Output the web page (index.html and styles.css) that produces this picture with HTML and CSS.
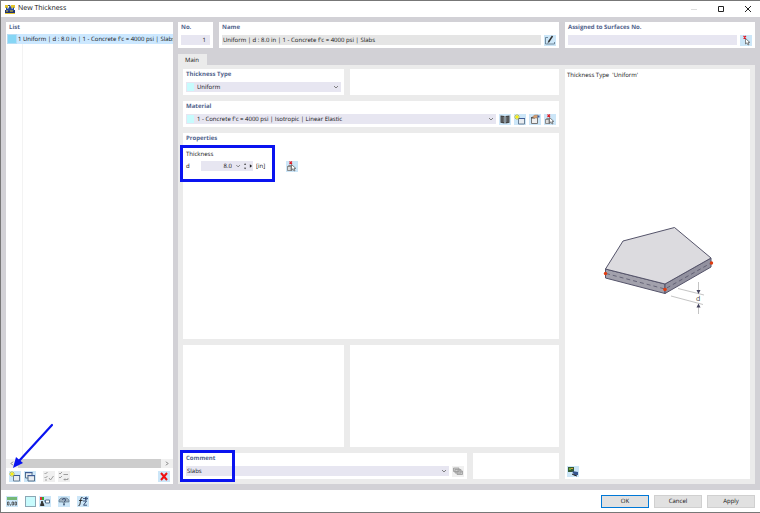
FILE: index.html
```html
<!DOCTYPE html>
<html lang="en">
<head>
<meta charset="utf-8">
<meta name="viewport" content="width=device-width, initial-scale=1">
<title>New Thickness</title>
<link rel="stylesheet" href="styles.css">
</head>
<body>
<svg class="defs" aria-hidden="true">
  <symbol id="chevron" viewBox="0 0 8 8"><path d="M2 3l2 2 2-2" fill="none" stroke="#666" stroke-width=".8"/></symbol>
  <symbol id="new" viewBox="0 0 12 11"><path d="M4.500 4.500h6v5.500h-6z" fill="#e8ecf0" stroke="#6a8096"/><path d="M4 4h7v1H4z" fill="#3d5c96"/><path d="M3 0v6M0 3h6M1 1l4 4M5 1L1 5" stroke="#c5bd19" stroke-width=".8"/><circle cx="3" cy="3" r="1.300" fill="#fff200"/></symbol>
  <symbol id="pick" viewBox="0 0 12 11"><path d="M1.500 5.500l1.500-1h3v5H1.500zM1.500 5.500h3.500v4" fill="#ddd" stroke="#777" stroke-width=".8"/><path d="M5.500 3.500v5.500l1.400-1.200 1.100 2.200 1-.5-1-2.100h1.800z" fill="#fff" stroke="#555" stroke-width=".7"/><path d="M3.500 .5l2.500 2.500M6 .5L3.500 3" stroke="#e01b24" stroke-width="1.100"/></symbol>
</svg>
<div class="window">
  <header class="titlebar">
    <svg class="app-icon" viewBox="0 0 12 11" aria-hidden="true"><path d="M1 6h10v3H1z" fill="#20316f"/><path d="M1 1h3v3H1zM7 1h4v3H7z" fill="#e2c52d"/><path d="M2 3l2 2 2-4 2 4 2-2v4H2z" fill="#294b99"/><path d="M1 9.500h10M2 7h2M6 7h3" stroke="#e2c52d"/><path d="M4 1.500h2" stroke="#48545b"/></svg>
    <h1>New Thickness</h1>
    <div class="caption">
      <button type="button" aria-label="Minimize"><svg viewBox="0 0 10 10"><path d="M2 5.500h6" stroke="#ddd"/></svg></button>
      <button type="button" aria-label="Maximize"><svg viewBox="0 0 10 10"><path d="M2.500 2.500h5v5h-5z" fill="none" stroke="#222"/></svg></button>
      <button type="button" aria-label="Close"><svg viewBox="0 0 10 10"><path d="M2 2l6 6M8 2L2 8" stroke="#222"/></svg></button>
    </div>
  </header>

  <main class="body">
    <section class="panel list">
      <h2 class="label">List</h2>
      <ul class="items">
        <li class="item"><span class="item-swatch"></span><span class="item-text">1 Uniform | d : 8.0 in | 1 - Concrete f'c = 4000 psi | Slabs</span></li>
      </ul>
      <div class="scrollbar">
        <svg viewBox="0 0 10 10"><path d="M6 3L4 5l2 2" fill="none" stroke="#666"/></svg>
        <span class="thumb"></span>
        <svg viewBox="0 0 10 10"><path d="M4 3l2 2-2 2" fill="none" stroke="#666"/></svg>
      </div>
      <div class="tools">
        <button type="button" class="icon" aria-label="New">
          <svg viewBox="0 0 12 11"><use href="#new"/></svg>
        </button>
        <button type="button" class="icon" aria-label="Copy"><svg viewBox="0 0 12 11"><path d="M1.500 1.500h6.500v5.500h-6.500z" fill="#e8ecf0" stroke="#55708c"/><path d="M1 1h7.500v1.200H1z" fill="#3d5c96"/><path d="M4 4.500h6.500V10H4z" fill="#e8ecf0" stroke="#55708c"/><path d="M3.500 4H11v1.200H3.500z" fill="#3d5c96"/></svg></button>
        <button type="button" class="icon off gap" aria-label="Check all" disabled><svg viewBox="0 0 12 11"><path d="M1.500 2l1 1 2-2M1.500 6l1 1 2-2M2 9h2M6 7l1.500 2L10.500 5" fill="none" stroke="#8a8a8a" stroke-width=".8"/></svg></button>
        <button type="button" class="icon off" aria-label="Toggle checks" disabled><svg viewBox="0 0 12 11"><path d="M1 2l1 1 2-2M1 6l1 1 2-2M5.500 3.500H10M6 8.500h4V7M6 8.500l1-1M6 8.500l1 1" fill="none" stroke="#8a8a8a" stroke-width=".8"/></svg></button>
        <button type="button" class="icon last" aria-label="Delete"><svg viewBox="0 0 12 11"><path d="M3 2l6 7M9 2L3 9" stroke="#f01010" stroke-width="2"/></svg></button>
        <svg class="arrow" viewBox="0 0 44 50" aria-hidden="true"><path d="M42 3L9 39" stroke="#0a14f0" stroke-width="2.200" stroke-linecap="round"/><path d="M3 46l3-11 7 6z" fill="#0a14f0"/></svg>
      </div>
    </section>

    <div class="detail">
      <div class="heading">
        <section class="panel">
          <label class="label" for="no">No.</label>
          <div class="row"><input id="no" class="field num" value="1"></div>
        </section>
        <section class="panel">
          <label class="label" for="name">Name</label>
          <div class="row">
            <input id="name" class="field plain" readonly value="Uniform | d : 8.0 in | 1 - Concrete f'c = 4000 psi | Slabs">
            <button type="button" class="icon" aria-label="Edit name"><svg viewBox="0 0 12 11"><path d="M4 2.500H1.500v6.500h9V7" fill="none" stroke="#5a7388" stroke-width=".8"/><path d="M8.500 1L4.500 7" stroke="#333" stroke-width="1.500"/><path d="M4.800 6.500l-1 1.800" stroke="#333" stroke-width=".7"/></svg></button>
          </div>
        </section>
        <section class="panel">
          <label class="label" for="surfaces">Assigned to Surfaces No.</label>
          <div class="row">
            <input id="surfaces" class="field">
            <button type="button" class="icon" aria-label="Select surfaces"><svg viewBox="0 0 12 11"><path d="M5.500 3.500v5.500l1.400-1.200 1.100 2.200 1-.5-1-2.100h1.800z" fill="#fff" stroke="#555" stroke-width=".7"/><path d="M3.500 1l2.500 2.500M6 1L3.500 3.500" stroke="#e01b24" stroke-width="1.100"/></svg></button>
          </div>
        </section>
      </div>

      <nav class="tabs"><button type="button" class="tab">Main</button></nav>

      <div class="page">
        <div class="form">
          <div class="split">
            <section class="panel">
              <label class="label" for="type">Thickness Type</label>
              <div class="row">
                <div class="combo"><i class="swatch"></i><select id="type" class="field"><option>Uniform</option></select><svg class="chev"><use href="#chevron"/></svg></div>
              </div>
            </section>
            <section class="panel"></section>
          </div>
          <section class="panel">
            <label class="label" for="material">Material</label>
            <div class="row">
              <div class="combo"><i class="swatch"></i><select id="material" class="field"><option>1 - Concrete f'c = 4000 psi | Isotropic | Linear Elastic</option></select><svg class="chev"><use href="#chevron"/></svg></div>
              <button type="button" class="icon" aria-label="Library"><svg viewBox="0 0 12 11"><path d="M1.500 1.500l4 .5v7.500l-4-.8zM10.500 1.500l-4 .5v7.500l4-.8z" fill="#444"/><path d="M3 3v5M4.500 3v5M7.500 3v5M9 3v5" stroke="#8f979d" stroke-width=".5"/></svg></button>
              <button type="button" class="icon" aria-label="New material"><svg viewBox="0 0 12 11"><use href="#new"/></svg></button>
              <button type="button" class="icon" aria-label="Edit material"><svg viewBox="0 0 12 11"><path d="M2.500 3.500h6v6h-6z" fill="#eee" stroke="#777"/><path d="M2 3h4v1.500H2z" fill="#555"/><path d="M3.500 3l2-2h3.500l-1 3H5z" fill="#d7a276" stroke="#8a6a50" stroke-width=".4"/><path d="M8.500 1.500h2v2h-2z" fill="#4063a0"/></svg></button>
              <button type="button" class="icon" aria-label="Pick material"><svg viewBox="0 0 12 11"><use href="#pick"/></svg></button>
            </div>
          </section>
          <section class="panel properties">
            <h2 class="label">Properties</h2>
            <div class="thickness">
              <label for="d">Thickness</label>
              <div class="row">
                <span class="symbol">d</span>
                <div class="spin">
                  <input id="d" class="field num" value="8.0">
                  <svg class="spin-marks" viewBox="0 0 20 10" aria-hidden="true"><path d="M1.500 4l2 2 2-2" fill="none" stroke="#555" stroke-width=".8"/><path d="M10 3.500l1.200-1.500 1.200 1.500zM10 7l1.200 1.500L12.400 7zM16.500 3l2.500 2-2.500 2z" fill="#222"/></svg>
                </div>
                <span class="unit">[in]</span>
                <button type="button" class="icon" aria-label="Pick thickness"><svg viewBox="0 0 12 11"><use href="#pick"/></svg></button>
              </div>
              <span class="mark mark-thickness"></span>
            </div>
          </section>
          <div class="split lower">
            <section class="panel"></section>
            <section class="panel"></section>
          </div>
          <div class="split comment-row">
            <section class="panel comment">
              <label class="label" for="comment">Comment</label>
              <div class="row">
                <div class="combo"><input id="comment" class="field" value="Slabs"><svg class="chev"><use href="#chevron"/></svg></div>
                <button type="button" class="icon off" aria-label="Comments" disabled><svg viewBox="0 0 12 11"><path d="M1.500 2h5.500v3.500H1.500zM3 3.500h6V7H3zM5 5h5.500v3.500H5z" fill="#ccc" stroke="#999" stroke-width=".8"/></svg></button>
              </div>
              <span class="mark mark-comment"></span>
            </section>
            <section class="panel"></section>
          </div>
        </div>

        <aside class="panel preview">
          <p>Thickness Type&nbsp; 'Uniform'</p>
          <svg class="slab" viewBox="567 223 180 100" role="img" aria-label="Uniform slab of thickness d">
            <g stroke="#55546a" stroke-width="1" stroke-linejoin="round">
              <path d="M605.500 269l59.500 15v9.500L605.500 278z" fill="#a2a1ac"/>
              <path d="M665 284l46-26v9l-46 26.500z" fill="#92919f"/>
              <path d="M605.500 269l17.500-28 51.500-13.500L711 258l-46 26z" fill="#dcdbdf"/>
              <path d="M606 273.500l59 15.500 46-26" fill="none" stroke-dasharray="4 3" stroke-width=".8"/>
            </g>
            <path d="M678 288.500l26 6.500M671 296l32 8.500" stroke="#aaa" stroke-width=".7"/>
            <path d="M698.500 282v9M698.500 305v9" stroke="#aaa" stroke-width=".7"/>
            <path d="M696.500 290h4l-2 4zM696.500 307.500h4l-2-4z" fill="#44435c"/>
            <g fill="#e03c10"><circle cx="605.500" cy="273.500" r="1.700"/><circle cx="665" cy="289.500" r="1.800"/><circle cx="711.500" cy="263" r="1.700"/></g>
            <text x="696" y="301" font-size="7" fill="#444">d</text>
          </svg>
          <button type="button" class="icon" aria-label="Picture options"><svg viewBox="0 0 12 11"><path d="M1 1h6v5H1z" fill="#355b35"/><path d="M2 2h2v2H2z" fill="#6fae3c"/><path d="M4 2h2v1H4z" fill="#d9a23c"/><path d="M5 5l6 1v3H7z" fill="#36568f"/><path d="M5 8l2 1 3 1" stroke="#222"/></svg></button>
        </aside>
      </div>
    </div>
  </main>

  <footer class="footer">
    <button type="button" class="icon" aria-label="Units"><svg viewBox="0 0 12 11"><path d="M1 1h10v3H1z" fill="#75b877"/><path d="M1.500 6h1.500v3H1.500zM6 6h1.500v3H6zM9 6h1.500v3H9z" fill="none" stroke="#333" stroke-width=".7"/><path d="M4 9h1" stroke="#333"/></svg></button>
    <button type="button" class="color gap" aria-label="Color"></button>
    <button type="button" class="icon" aria-label="Display"><svg viewBox="0 0 12 11"><path d="M1 1h2v3H1z" fill="#d33"/><path d="M3 1h2v3H3z" fill="#3a3"/><path d="M1.500 9.500L3 5l2 4.500z" fill="#333" stroke="#333"/><path d="M6.500 4h4v3h-4zM5 5h2" fill="#fff" stroke="#55708c"/></svg></button>
    <button type="button" class="icon gap" aria-label="Help"><svg viewBox="0 0 12 11"><path d="M1 4l2-2h6l2 2v2H7L6 9 5 6H1z" fill="#9db0c0" stroke="#526b80" stroke-width=".6"/><path d="M4.500 4q0-1.500 1.500-1.500T7.500 4Q7.500 5 6 6" fill="none" stroke="#253e68" stroke-width=".8"/><path d="M6 8v1.500" stroke="#253e68"/></svg></button>
    <button type="button" class="icon gap" aria-label="Formula"><svg viewBox="0 0 12 11"><path d="M5.500 1.500Q4 1 3.800 3L3 8q-.3 2-1.500 1.500M2 4.500h3.500" fill="none" stroke="#222" stroke-width=".9"/><path d="M6 5h3.500L6.500 9.200H10" fill="none" stroke="#253e68" stroke-width=".9"/><path d="M6 2.500h4.500M8.500 1v3.500M9 .8l1.800 1.700L9 4.200" fill="none" stroke="#253e68" stroke-width=".8"/></svg></button>
    <div class="actions">
      <button type="button" class="btn primary">OK</button>
      <button type="button" class="btn">Cancel</button>
      <button type="button" class="btn">Apply</button>
    </div>
  </footer>
</div>
</body>
</html>
```
FILE: styles.css
```css
* { box-sizing: border-box; }

body {
  margin: 0;
  font: 6px/10px "Open Sans", "Noto Sans", sans-serif;
  text-rendering: geometricPrecision;
  color: #111;
}

button, input, select {
  margin: 0;
  padding: 0;
  border: 0;
  border-radius: 0;
  font: inherit;
  color: inherit;
  text-rendering: inherit;
}

svg { display: block; }
.defs { position: absolute; width: 0; height: 0; }

.window {
  display: flex;
  flex-direction: column;
  min-height: 100vh;
  border: 1px solid #777;
  border-right-width: 0;
  background: #fff;
}

.titlebar { display: flex; align-items: center; gap: 2px; height: 16px; padding: 0 7px 0 3px; }
.titlebar h1 { flex: 1; margin: 0; font-size: 7px; font-weight: 400; }
.app-icon { width: 12px; height: 11px; }
.caption { display: flex; gap: 17px; }
.caption button { width: 10px; height: 10px; background: none; }
.caption svg { width: 10px; height: 10px; }

.body {
  flex: 1;
  display: grid;
  grid-template-columns: 167fr 577fr;
  gap: 5px;
  padding: 5px 5px 6px;
  background: #d2d1d6;
}

.panel { position: relative; min-width: 0; padding: 0 3px 3px; background: #fff; }
.label { display: block; height: 10px; margin: 0 0 3px; font-size: 6px; font-weight: 700; line-height: 11px; color: #52648d; }
.row { display: flex; align-items: center; gap: 3px; }

.field { flex: 1; width: 100%; min-width: 0; height: 10px; padding: 0 2px 0 1px; background: #e7e6f1; appearance: none; line-height: 10px; }
.field.plain { background: #e5e5e5; }
.field.num { padding-right: 4px; text-align: right; }

.combo { position: relative; flex: 1; min-width: 0; display: flex; }
.swatch { position: absolute; left: 1px; top: 1px; width: 7px; height: 8px; background: #c8fbfd; }
.swatch + .field { padding-left: 11px; }
.chev { position: absolute; right: 1px; top: 1px; width: 8px; height: 8px; }

.icon { flex: none; width: 12px; height: 11px; margin-bottom: -1px; background: #cce6f8; }
.icon svg { width: 12px; height: 11px; }
.icon.off { background: #f0f0f0; }

/* item list */
.list { display: flex; flex-direction: column; padding: 0 0 2px; }
.list .label { margin: 0 0 2px; padding-left: 3px; }
.items {
  flex: 1;
  margin: 0;
  padding: 0 0 0 1px;
  list-style: none;
  background: linear-gradient(#f3f3f3, #f3f3f3) 16px 0 / 1px 100% no-repeat;
}
.item { display: flex; gap: 1px; height: 10px; background: #cce8ff; }
.item-swatch { flex: none; width: 10px; border: 1px solid #b5ddf5; background: #86d6f5; }
.item-text { overflow: hidden; white-space: nowrap; }
.scrollbar { display: flex; height: 9px; background: #f0f0f0; }
.scrollbar svg { width: 12px; height: 9px; }
.thumb { flex: 1; background: #cdcdcd; }
.tools { position: relative; display: flex; gap: 3px; padding: 3px 3px 1px; }
.tools .gap { margin-left: 4px; }
.tools .last { margin-left: auto; }
.arrow { position: absolute; left: 4px; bottom: 10px; width: 44px; height: 50px; }

/* detail area */
.detail { display: flex; flex-direction: column; min-width: 0; }
.heading { display: grid; grid-template-columns: 35px 340fr 190fr; gap: 6px; }
.tabs { display: flex; margin-top: 6px; }
.tab { height: 11px; padding: 0 8px 0 7px; background: #ebebeb; }
.page {
  flex: 1;
  display: grid;
  grid-template-columns: 376fr 185fr;
  gap: 6px;
  padding: 4px 5px 5px;
  background: #ebebeb;
}
.form { display: flex; flex-direction: column; gap: 6px; min-width: 0; }
.split { display: grid; grid-template-columns: 161fr 209fr; gap: 6px; }
.properties { flex: 206; }
.lower { flex: 104; }
.comment-row { grid-template-columns: 284fr 86fr; }

.thickness { position: relative; padding-top: 3px; }
.thickness label { display: block; margin-bottom: 2px; }
.symbol { width: 12px; }
.spin { position: relative; width: 52px; }
.spin .field { padding-right: 21px; }
.spin-marks { position: absolute; right: 0; top: 0; width: 18px; height: 10px; }
.unit { width: 27px; }

.mark { position: absolute; border: 3px solid #0a14f0; }
.mark-thickness { left: -6px; top: -1px; width: 95px; height: 37px; }
.mark-comment { left: -3px; top: -3px; width: 55px; height: 32px; }

.preview { display: flex; flex-direction: column; padding: 0 3px 3px 2px; }
.preview p { margin: 1px 0 0; }
.slab { flex: 1; width: 100%; min-height: 0; }

/* footer */
.footer { display: flex; align-items: center; gap: 3px; height: 22px; padding: 0 5px; }
.footer .gap { margin-left: 4px; }
.color { width: 11px; height: 11px; border: 1px solid #8ba7b5; background: #c8fbfd; }
.actions { display: flex; gap: 5px; margin-left: auto; }
.btn { width: 48px; height: 13px; border: 1px solid #d0d0d0; background: #e1e1e1; }
.btn.primary { border-color: #0078d7; }
```
